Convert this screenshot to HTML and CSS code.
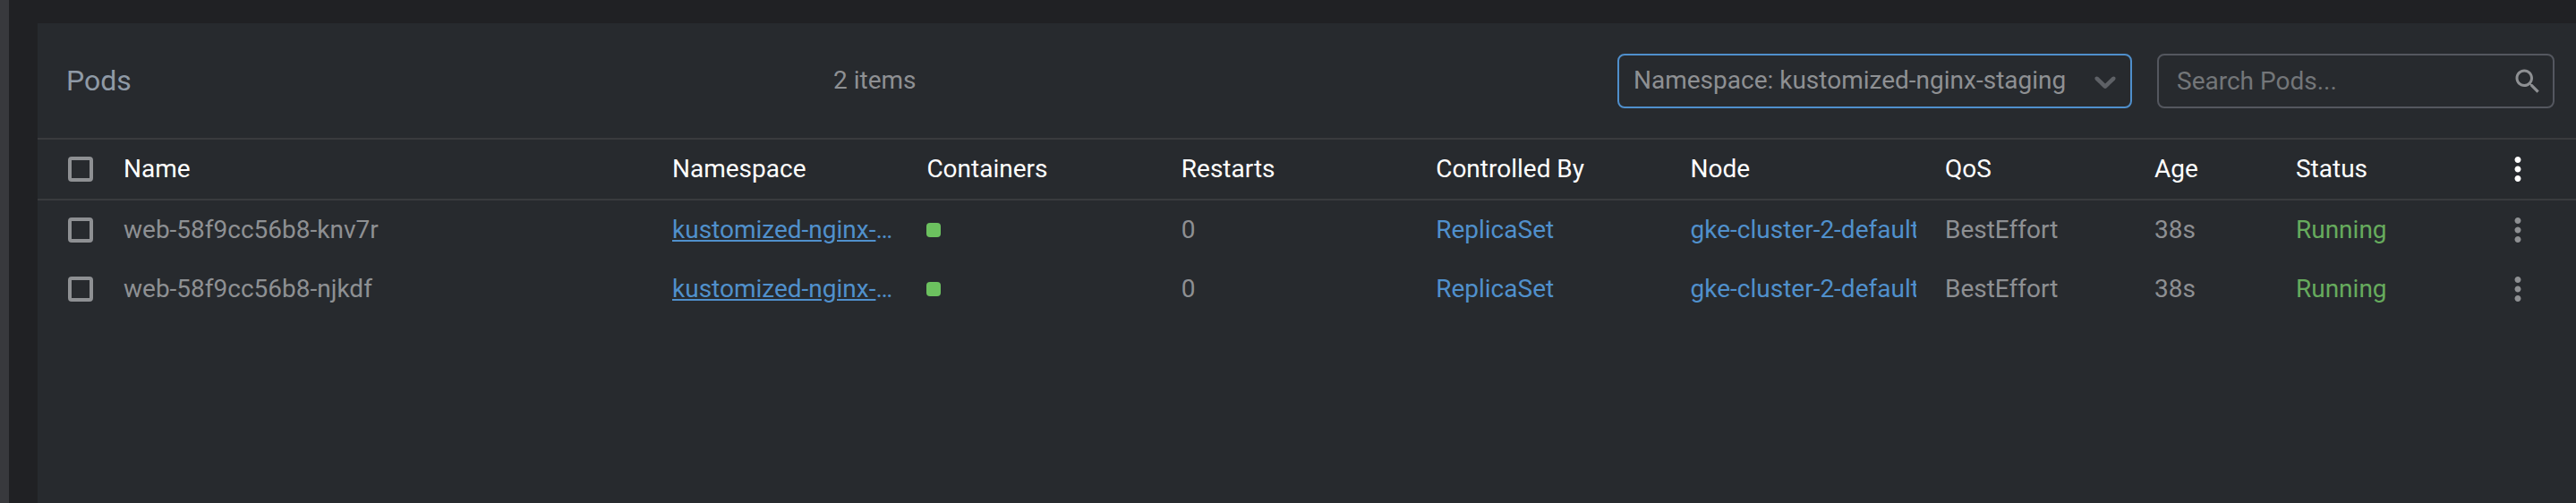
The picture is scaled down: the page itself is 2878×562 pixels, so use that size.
FILE: index.html
```html
<!DOCTYPE html>
<html lang="en">
<head>
<meta charset="utf-8">
<title>Pods</title>
<link rel="stylesheet" href="styles.css">
</head>
<body>
<svg class="defs" width="0" height="0">
  <symbol id="more" viewBox="0 0 24 24"><path d="M12 8c1.1 0 2-.9 2-2s-.9-2-2-2-2 .9-2 2 .9 2 2 2zm0 2c-1.100 0-2 .9-2 2s.9 2 2 2 2-.9 2-2-.9-2-2-2zm0 6c-1.100 0-2 .9-2 2s.9 2 2 2 2-.9 2-2-.9-2-2-2z"/></symbol>
</svg>
<div class="app">
  <main class="panel">
    <header class="toolbar">
      <h1 class="title">Pods</h1>
      <div class="count">2 items</div>
      <div class="select">
        <span class="select-value">Namespace: kustomized-nginx-staging</span>
        <svg class="chevron" viewBox="0 0 20 20"><path d="M4.516 7.548c0.436-0.446 1.043-0.481 1.576 0l3.908 3.747 3.908-3.747c0.533-0.481 1.141-0.446 1.574 0 0.436 0.445 0.408 1.197 0 1.615-0.406 0.418-4.695 4.502-4.695 4.502-0.217 0.223-0.502 0.335-0.787 0.335s-0.57-0.112-0.789-0.335c0 0-4.287-4.084-4.695-4.502s-0.436-1.17 0-1.615z"/></svg>
      </div>
      <div class="search">
        <span class="placeholder">Search Pods...</span>
        <svg class="search-icon" viewBox="0 0 24 24"><path d="M15.500 14h-.79l-.28-.27C15.410 12.590 16 11.110 16 9.500 16 5.910 13.090 3 9.500 3S3 5.910 3 9.500 5.910 16 9.500 16c1.610 0 3.090-.59 4.230-1.570l.27.28v.79l5 4.990L20.490 19l-4.990-5zm-6 0C7.010 14 5 11.990 5 9.500S7.010 5 9.500 5 14 7.010 14 9.500 11.990 14 9.500 14z"/></svg>
      </div>
    </header>
    <div class="row head">
      <div class="check"></div>
      <div class="cell">Name</div>
      <div class="cell">Namespace</div>
      <div class="cell">Containers</div>
      <div class="cell">Restarts</div>
      <div class="cell">Controlled By</div>
      <div class="cell">Node</div>
      <div class="cell">QoS</div>
      <div class="cell">Age</div>
      <div class="cell">Status</div>
      <svg class="more"><use href="#more"/></svg>
    </div>
    <div class="row">
      <div class="check"></div>
      <div class="cell">web-58f9cc56b8-knv7r</div>
      <div class="cell link ellipsis"><a class="underlined">kustomized-nginx-staging</a></div>
      <div class="cell"><span class="brick"></span></div>
      <div class="cell">0</div>
      <div class="cell link">ReplicaSet</div>
      <div class="cell link">gke-cluster-2-default</div>
      <div class="cell">BestEffort</div>
      <div class="cell">38s</div>
      <div class="cell running">Running</div>
      <svg class="more"><use href="#more"/></svg>
    </div>
    <div class="row">
      <div class="check"></div>
      <div class="cell">web-58f9cc56b8-njkdf</div>
      <div class="cell link ellipsis"><a class="underlined">kustomized-nginx-staging</a></div>
      <div class="cell"><span class="brick"></span></div>
      <div class="cell">0</div>
      <div class="cell link">ReplicaSet</div>
      <div class="cell link">gke-cluster-2-default</div>
      <div class="cell">BestEffort</div>
      <div class="cell">38s</div>
      <div class="cell running">Running</div>
      <svg class="more"><use href="#more"/></svg>
    </div>
  </main>
</div>
</body>
</html>
```
FILE: styles.css
```css
* { box-sizing: border-box; }
body {
  margin: 0;
  overflow: hidden;
  background: #202124;
  color: #8e9093;
  font: 28px/36px Roboto, sans-serif;
}
.defs { display: block; }
.app {
  height: 562px;
  border-left: 10px solid #38393d;
  padding: 26px 0 0 32px;
}
.panel {
  height: 536px;
  background: #272a2e;
}
.toolbar {
  height: 130px;
  display: grid;
  grid-template-columns: 857px 876px 575px 472px;
  padding: 1px 24px 0 32px;
  border-bottom: 2px solid #393b3e;
  align-items: center;
}
.title {
  margin: 0;
  padding-bottom: 2px;
  font-size: 32px;
  font-weight: 400;
  color: #8f9aa6;
}
.count, .select-value { padding-bottom: 2px; }
.select, .search {
  height: 61px;
  display: flex;
  align-items: center;
  justify-content: space-between;
  border: 2px solid #54575f;
  border-radius: 8px;
}
.select {
  border-color: #4f8fcc;
  padding: 0 8px 0 16px;
}
.search {
  margin-left: 28px;
  width: 444px;
  padding: 0 10px 0 20px;
}
.placeholder { color: #737679; }
.chevron { width: 40px; height: 40px; fill: #5e6166; }
.search-icon { width: 36px; height: 36px; fill: #8e9093; }
.row {
  height: 66px;
  display: grid;
  grid-template-columns: 62px 613px 284.400px 284.400px 284.400px 284.400px 284.400px 234px 158px 227px 42px;
  padding-left: 34px;
  align-items: center;
}
.head {
  height: 68px;
  color: #fff;
  border-bottom: 2px solid #393b3e;
}
.cell {
  margin-right: 32px;
  overflow: hidden;
  white-space: nowrap;
}
.ellipsis { text-overflow: ellipsis; }
.link { color: #5090cc; }
.underlined { text-decoration: underline; }
.running { color: #66ab5d; }
.check {
  width: 28px;
  height: 28px;
  border: 4px solid #8e9093;
  border-radius: 4px;
}
.brick {
  display: block;
  width: 16px;
  height: 16px;
  border-radius: 4px;
  background: #6cc15f;
}
.more { width: 42px; height: 42px; fill: currentColor; }
```
